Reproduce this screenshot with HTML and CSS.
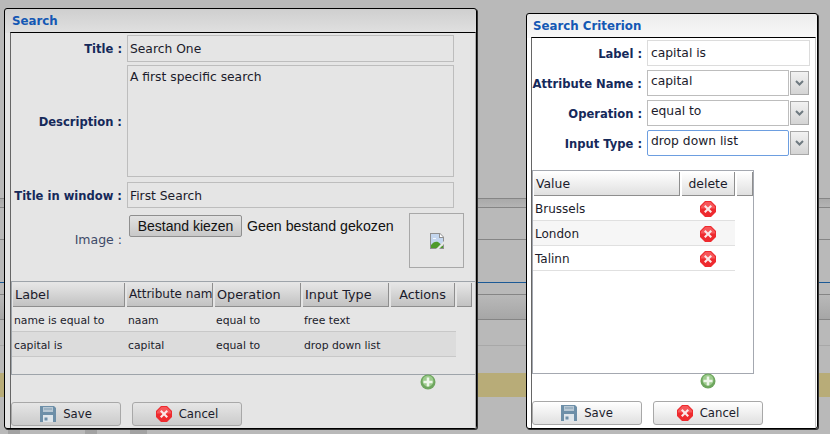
FILE: index.html
```html
<!DOCTYPE html>
<html lang="en">
<head>
<meta charset="utf-8">
<title>Search</title>
<link rel="stylesheet" href="styles.css">
</head>
<body>
<svg class="defs" width="0" height="0" aria-hidden="true">
  <defs>
    <symbol id="i-del" viewBox="0 0 16 16">
      <path d="M5 0h6l5 5v6l-5 5H5l-5-5V5z" fill="#ee2a2e"/>
      <path d="M5.500 1h5l4.500 4.500v2H1v-2z" fill="#f6575a"/>
      <path d="M4 5.500L5.500 4 8 6.500 10.500 4 12 5.500 9.500 8 12 10.500 10.500 12 8 9.500 5.500 12 4 10.500 6.500 8z" fill="#fbe9e9"/>
    </symbol>
    <symbol id="i-add" viewBox="0 0 16 16">
      <circle cx="8" cy="8" r="7.500" fill="#6ea65e"/>
      <circle cx="8" cy="7" r="5.500" fill="#9ccb8c"/>
      <path d="M6.700 3.500h2.600v3.200h3.200v2.600H9.300v3.200H6.700V9.300H3.500V6.700h3.200z" fill="#eef6ea"/>
    </symbol>
    <symbol id="i-save" viewBox="0 0 16 16">
      <path d="M0 0h14l2 2v14H0z" fill="#6d8fa8"/>
      <path d="M3 1h10v5H3z" fill="#b8c8d4"/>
      <path d="M4 2.500h8v1H4z" fill="#7f9ab0"/>
      <path d="M3 9h10v7H3z" fill="#dfe6eb"/>
      <path d="M4.500 11.500h3v3h-3z" fill="#6d8fa8"/>
    </symbol>
  </defs>
</svg>

<div class="desk">
  <div class="band b1"></div>
  <div class="band line"></div>
  <div class="band b2"></div>
  <div class="band line"></div>
  <div class="band b3"></div>
  <div class="band line"></div>
  <div class="band b4"></div>
  <div class="band blue"></div>
  <div class="band b5"></div>
  <div class="band line"></div>
  <div class="band b6"></div>
  <div class="band line"></div>
  <div class="band b7"></div>
  <div class="band faint"></div>
  <div class="band b8"></div>
  <div class="band tan"></div>
  <div class="band b9"></div>
  <div class="stubs"><span class="stub s1"></span><span class="stub s2"></span><span class="stub s3"></span></div>
</div>

<section class="win win-back">
  <h2 class="win-title">Search</h2>
  <div class="win-body">
    <div class="form">
      <label class="lbl">Title :</label>
      <div class="field h27">Search One</div>
      <label class="lbl">Description :</label>
      <div class="field area">A first specific search</div>
      <label class="lbl lbl-gap">Title in window :</label>
      <div class="field field-gap">First Search</div>
      <label class="lbl lbl-plain lbl-gap">Image :</label>
      <div class="file-row">
        <span class="file-btn">Bestand kiezen</span>
        <span class="file-name">Geen bestand gekozen</span>
        <div class="preview">
          <svg width="14" height="16" viewBox="0 0 14 16">
            <path d="M0 0h10l4 4v12H0z" fill="#8f8f8f"/>
            <path d="M1 1h8v4h4v10H1z" fill="#c4d6ee"/>
            <path d="M10 1l3 3h-3z" fill="#fff"/>
            <path d="M1 15v-3c2-3 5-4 7-3l5 4v2z" fill="#4f9a2c"/>
            <path d="M3 5h3v1H3z" fill="#f4f8fc"/>
            <path d="M6 16l8-8v3l-5 5z" fill="#e6e6e6"/>
          </svg>
        </div>
      </div>
    </div>

    <div class="tbl tbl-main">
      <div class="thead">
        <div class="th">Label</div>
        <div class="th th-attr">Attribute nam</div>
        <div class="th">Operation</div>
        <div class="th">Input Type</div>
        <div class="th th-center">Actions</div>
        <div class="th"></div>
      </div>
      <div class="tr">
        <div class="td">name is equal to</div><div class="td">naam</div><div class="td">equal to</div><div class="td">free text</div><div class="td"></div>
      </div>
      <div class="tr alt">
        <div class="td">capital is</div><div class="td">capital</div><div class="td">equal to</div><div class="td">drop down list</div><div class="td"></div>
      </div>
    </div>
    <div class="add-row add-main"><svg class="ico"><use href="#i-add"/></svg></div>
    <div class="actions">
      <button class="btn"><svg class="ico"><use href="#i-save"/></svg>Save</button>
      <button class="btn"><svg class="ico"><use href="#i-del"/></svg>Cancel</button>
    </div>
  </div>
</section>

<section class="win win-front">
  <h2 class="win-title">Search Criterion</h2>
  <div class="win-body">
    <div class="crit">
      <label class="lbl">Label :</label>
      <div class="field wide">capital is</div>
      <label class="lbl">Attribute Name :</label>
      <div class="combo"><div class="field combo-in">capital</div><span class="drop"><svg width="9" height="6" viewBox="0 0 9 6"><path d="M1 1l3.500 3.500L8 1" fill="none" stroke="#6f7a80" stroke-width="2"/></svg></span></div>
      <label class="lbl">Operation :</label>
      <div class="combo"><div class="field combo-in">equal to</div><span class="drop"><svg width="9" height="6" viewBox="0 0 9 6"><path d="M1 1l3.500 3.500L8 1" fill="none" stroke="#6f7a80" stroke-width="2"/></svg></span></div>
      <label class="lbl">Input Type :</label>
      <div class="combo"><div class="field combo-in focus">drop down list</div><span class="drop"><svg width="9" height="6" viewBox="0 0 9 6"><path d="M1 1l3.500 3.500L8 1" fill="none" stroke="#6f7a80" stroke-width="2"/></svg></span></div>
    </div>

    <div class="tbl tbl-values">
      <div class="thead">
        <div class="th">Value</div>
        <div class="th th-center">delete</div>
        <div class="th"></div>
      </div>
      <div class="tr"><div class="td">Brussels</div><div class="td td-icon"><svg class="ico"><use href="#i-del"/></svg></div></div>
      <div class="tr alt"><div class="td">London</div><div class="td td-icon"><svg class="ico"><use href="#i-del"/></svg></div></div>
      <div class="tr"><div class="td">Talinn</div><div class="td td-icon"><svg class="ico"><use href="#i-del"/></svg></div></div>
    </div>
    <div class="add-row add-values"><svg class="ico"><use href="#i-add"/></svg></div>
    <div class="actions">
      <button class="btn"><svg class="ico"><use href="#i-save"/></svg>Save</button>
      <button class="btn"><svg class="ico"><use href="#i-del"/></svg>Cancel</button>
    </div>
  </div>
</section>
</body>
</html>
```

FILE: styles.css
```css
* { box-sizing: border-box; }
html, body { margin: 0; padding: 0; }
body {
  width: 830px;
  height: 434px;
  overflow: hidden;
  position: relative;
  background: #b9b9b9;
  font-family: "DejaVu Sans", Verdana, sans-serif;
  font-size: 12px;
  color: #1b1b2b;
}
.defs { position: absolute; }

/* dimmed page behind the dialogs */
.desk { display: flex; flex-direction: column; height: 434px; }
.band { flex: none; }
.line { height: 1px; background: #858585; }
.b1 { height: 198px; }
.b2 { height: 8px; background: linear-gradient(#a9a9a9, #b4b4b4); }
.b3 { height: 31px; }
.b4 { height: 42px; }
.blue { height: 1px; background: #1c5a96; }
.b5 { height: 11px; }
.b6 { height: 24px; background: linear-gradient(#b9b9b9, #a6a6a6); }
.b7 { height: 25px; }
.faint { height: 1px; background: #a8a8a8; }
.b8 { height: 27px; }
.tan { height: 24px; background: #b8ac78; }
.b9 { height: 32px; }
.stubs { display: flex; height: 5px; padding-left: 8px; }
.stub { height: 5px; background: #a2a2a2; }
.s1 { width: 12px; }
.s2 { width: 12px; margin-left: 65px; }
.s3 { width: 17px; margin-left: 33px; }

/* windows on the desktop */
.win {
  position: absolute;
  border: 1px solid #000;
  border-radius: 3px;
  display: flex;
  flex-direction: column;
  box-shadow: 1px 1px 0 #333;
}
.win-back {
  left: 4px; top: 8px; width: 473px; height: 421px;
  background: linear-gradient(#cfcfcf, #e0e0e0 24px, #e5e5e5 24px);
}
.win-front {
  left: 526px; top: 13px; width: 292px; height: 416px;
  background: linear-gradient(#ececec, #f8f8f8 24px, #fff 24px);
}
.win-title {
  margin: 0;
  flex: none;
  height: 23px;
  padding: 5px 0 0 7px;
  font-size: 11.8px;
  line-height: 15px;
  font-weight: bold;
  color: #1458b4;
}
.win-front .win-title { padding-left: 6px; }
.win-body {
  flex: 1;
  margin-left: 5px;
  border-top: 1px solid #000;
  border-left: 1px solid #666;
  border-right: 1px solid #b0b0b0;
  display: flex;
  flex-direction: column;
}
.win-back .win-body { background: #e5e5e5; }
.win-front .win-body { background: #fff; margin-left: 4px; margin-right: 1px; border-right-color: #c8c8c8; }

/* forms */
.form, .crit { display: grid; align-items: center; }
.form {
  grid-template-columns: 111px 327px;
  column-gap: 5px;
  row-gap: 3px;
  padding-top: 2px;
}
.crit {
  grid-template-columns: 110px 163px;
  column-gap: 5px;
  row-gap: 4px;
  padding-top: 2px;
}
.lbl {
  text-align: right;
  font-size: 11.55px;
  font-weight: bold;
  color: #15295a;
  white-space: nowrap;
  padding-top: 1px;
}
.lbl-plain { font-weight: normal; color: #3d4a68; font-size: 12.5px; }
.lbl-gap { margin-top: 2px; }
.win-back .lbl-plain { margin-top: 0; padding-bottom: 1px; }
.field {
  border: 1px solid #bdbdbd;
  padding: 0 3px;
  font-size: 12.3px;
  color: #1b1b2b;
  white-space: nowrap;
}
.form .field { padding-left: 2px; }
.h27 { height: 27px; line-height: 26px; }
.field-gap { margin-top: 2px; height: 26px; line-height: 26px; }
.area { height: 112px; line-height: 22px; }
.wide { width: 163px; height: 26px; line-height: 24px; }
.win-front .wide { border-color: #dcdcdc; }

.file-row {
  display: flex;
  align-items: flex-start;
  height: 55px;
  margin-top: 2px;
  padding: 2px 0 0 2px;
  font-family: "Liberation Sans", Arial, sans-serif;
  font-size: 14px;
}
.file-btn {
  flex: none;
  width: 113px;
  height: 22px;
  line-height: 20px;
  text-align: center;
  border: 1px solid #8f8f8f;
  border-radius: 2px;
  background: linear-gradient(#e2e2e2, #c8c8c8);
  color: #111;
}
.file-name { flex: none; margin-left: 5px; font-size: 14.2px; line-height: 22px; color: #111; width: 162px; white-space: nowrap; }
.preview {
  flex: none;
  width: 55px;
  height: 55px;
  margin-top: -2px;
  border: 1px solid #a8a8a8;
  display: flex;
  align-items: center;
  justify-content: center;
}

.combo { display: flex; gap: 1px; }
.combo-in { width: 142px; height: 26px; line-height: 21px; }
.focus { border-color: #6d9ee0; box-shadow: inset 0 0 0 1px #fff; border-radius: 2px; }
.drop {
  width: 19px;
  height: 24px;
  margin-top: 1px;
  border: 1px solid #a8a8a8;
  background: linear-gradient(#f2f2f2, #d4d4d4);
  display: flex;
  align-items: center;
  justify-content: center;
}

/* tables */
.tbl {
  border: 1px solid #a4a8b0;
  padding: 1px 0 0 1px;
}
.tbl-main {
  width: 464px;
  height: 94px;
  margin-top: 13px;
  border-right: 0;
  border-color: #9ea4aa;
  --cols: 112px 86px 86px 86px 64px 15px;
}
.tbl-values {
  width: 222px;
  height: 204px;
  margin-top: 14px;
  --cols: 146px 53px 16px;
}
.thead, .tr { display: grid; grid-template-columns: var(--cols); column-gap: 2px; }
.th {
  height: 24px;
  line-height: 23px;
  padding-left: 2px;
  white-space: nowrap;
  font-size: 12.8px;
  color: #1b1b2b;
  border-bottom: 1px solid #8e8e8e;
  border-right: 1px solid #8e8e8e;
}
.tbl-main .th { background: linear-gradient(#e6e6e6, #c2c2c2); }
.tbl-values .th { background: linear-gradient(#fff, #e0e0e0); font-size: 12.4px; }
.tbl-main .th-attr { font-size: 12px; padding-left: 2px; }
.th-center { text-align: center; padding-left: 0; }
.tr { height: 25px; margin-left: -1px; padding-left: 1px; }
.tbl-main .tr { width: 444px; border-bottom: 1px solid #c8c8c8; }
.tbl-values .tr { width: 202px; border-bottom: 1px solid #e0e0e0; }
.tbl-main .tr.alt { background: #dcdcdc; }
.tbl-values .tr.alt { background: #f6f6f6; }
.td {
  font-size: 10.8px;
  line-height: 28px;
  padding-left: 1px;
  white-space: nowrap;
  color: #1b1b2b;
}
.tbl-values .td { font-size: 12px; line-height: 26px; }
.td-icon { display: flex; align-items: center; justify-content: center; padding-right: 2px; }

.ico { width: 16px; height: 16px; flex: none; display: block; }
.add-row { display: flex; height: 16px; }
.add-main { padding-left: 409px; margin-top: -1px; }
.add-values { padding-left: 168px; margin-top: -1px; }

.actions { display: flex; gap: 11px; margin-top: 12px; }
.btn {
  width: 110px;
  height: 24px;
  padding: 0;
  display: flex;
  align-items: center;
  justify-content: center;
  gap: 7px;
  border: 1px solid #a8a8a8;
  border-radius: 3px;
  font-family: "DejaVu Sans", Verdana, sans-serif;
  font-size: 11.7px;
  color: #1b1b2b;
}
.win-back .btn { background: linear-gradient(#e6e6e6, #cbcbcb); }
.win-front .btn { background: linear-gradient(#fff, #e0e0e0); }
```
